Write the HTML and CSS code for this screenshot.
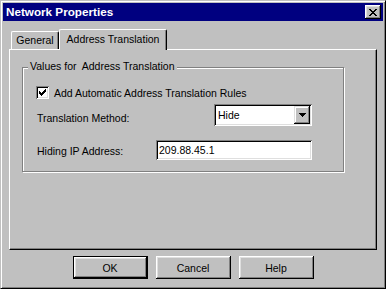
FILE: index.html
```html
<!DOCTYPE html>
<html lang="en">
<head>
    <meta charset="UTF-8">
    <meta name="viewport" content="width=device-width, initial-scale=1.0">
    <title>Network Properties</title>
    <link rel="stylesheet" href="styles.css">
</head>
<body>

<div class="window">

    <div class="titlebar">
        <span class="title">Network Properties</span>
        <button class="close-btn" aria-label="Close">
            <svg width="8" height="7" viewBox="0 0 8 7" shape-rendering="crispEdges">
                <path fill="#000" d="M0 0h2v1H0z M6 0h2v1H6z M1 1h2v1H1z M5 1h2v1H5z M2 2h4v1H2z M3 3h2v1H3z M2 4h4v1H2z M1 5h2v1H1z M5 5h2v1H5z M0 6h2v1H0z M6 6h2v1H6z"/>
            </svg>
        </button>
    </div>

    <div class="tabs">
        <div class="tab">General</div>
        <div class="tab tab-active">Address Translation</div>
    </div>

    <div class="panel">
        <div class="group">
            <span class="group-label">Values for&nbsp; Address Translation</span>

            <div class="check-row">
                <span class="checkbox">
                    <svg width="7" height="7" viewBox="0 0 7 7" shape-rendering="crispEdges">
                        <path fill="#000" d="M6 0h1v1H6z M5 1h2v1H5z M0 2h1v1H0z M4 2h3v1H4z M0 3h2v1H0z M3 3h3v1H3z M0 4h5v1H0z M1 5h3v1H1z M2 6h1v1H2z"/>
                    </svg>
                </span>
                <span>Add Automatic Address Translation Rules</span>
            </div>

            <div class="row row-method">
                <span class="row-label label-method">Translation Method:</span>
                <div class="field select">
                    <span class="select-value">Hide</span>
                    <span class="select-btn">
                        <svg width="7" height="4" viewBox="0 0 7 4" shape-rendering="crispEdges">
                            <path fill="#000" d="M0 0h7v1H0z M1 1h5v1H1z M2 2h3v1H2z M3 3h1v1H3z"/>
                        </svg>
                    </span>
                </div>
            </div>

            <div class="row row-ip">
                <span class="row-label label-ip">Hiding IP Address:</span>
                <div class="field text-field">209.88.45.1</div>
            </div>
        </div>
    </div>

    <div class="buttons">
        <button class="btn btn-default">OK</button>
        <button class="btn">Cancel</button>
        <button class="btn">Help</button>
    </div>

</div>

</body>
</html>
```

FILE: styles.css
```css
body {
    margin: 0;
    font-family: "Liberation Sans", Arial, sans-serif;
    font-size: 10.5px;
    line-height: 12px;
    color: #000;
    background-color: #c0c0c0;
}

.window {
    width: 386px;
    height: 289px;
    box-sizing: border-box;
    padding: 2px;
    background-color: #c0c0c0;
    border: 1px solid;
    border-color: #c0c0c0 #000 #000 #c0c0c0;
    box-shadow: inset 1px 1px #fff, inset -1px -1px #808080;
}

/* title bar */
.titlebar {
    height: 18px;
    background-color: #000080;
    display: flex;
    align-items: center;
    justify-content: space-between;
    padding: 0 2px 0 3px;
}
.title {
    color: #fff;
    font-weight: bold;
    font-size: 11.7px;
}
.close-btn {
    width: 16px;
    height: 14px;
    padding: 0;
    border: none;
    background-color: #c0c0c0;
    box-shadow: inset -1px -1px #000, inset 1px 1px #fff, inset -2px -2px #808080, inset 2px 2px #dfdfdf;
    display: flex;
    align-items: center;
    justify-content: center;
}

/* tabs */
.tabs {
    display: flex;
    align-items: flex-end;
    height: 20px;
    margin: 8px 0 0 8px;
    position: relative;
    z-index: 1;
}
.tab {
    width: 48px;
    height: 18px;
    box-sizing: border-box;
    border-top: 1px solid #fff;
    border-left: 1px solid #fff;
    border-right: 1px solid #000;
    border-radius: 2px 2px 0 0;
    box-shadow: inset -1px 0 #808080;
    background-color: #c0c0c0;
    text-align: center;
    line-height: 17px;
}
.tab-active {
    width: 108px;
    height: 21px;
    margin-bottom: -1px;
    line-height: 18px;
}

/* panel */
.panel {
    height: 201px;
    margin: 0 6px;
    box-sizing: border-box;
    border: 1px solid;
    border-color: #fff #000 #000 #fff;
    box-shadow: inset -1px -1px #808080;
    padding: 17px 0 0 12px;
}

.group {
    position: relative;
    width: 322px;
    height: 105px;
    box-sizing: border-box;
    border: 1px solid #808080;
    box-shadow: inset 1px 1px #fff, 1px 1px #fff;
    padding: 18px 0 0 13px;
}
.group-label {
    position: absolute;
    top: -8px;
    left: 5px;
    padding: 0 2px;
    background-color: #c0c0c0;
}

.check-row {
    display: flex;
    align-items: center;
    gap: 5px;
    height: 13px;
}
.checkbox {
    width: 13px;
    height: 13px;
    box-sizing: border-box;
    background-color: #fff;
    box-shadow: inset 1px 1px #808080, inset -1px -1px #fff, inset 2px 2px #000, inset -2px -2px #dfdfdf;
    display: flex;
    align-items: center;
    justify-content: center;
}

.row {
    display: flex;
    align-items: flex-start;
}
.row-method {
    margin-top: 5px;
}
.row-ip {
    margin-top: 14px;
}
.row-label {
    padding-left: 1px;
    box-sizing: border-box;
}
.label-method {
    width: 178px;
    padding-top: 8px;
}
.label-ip {
    width: 120px;
    padding-top: 5px;
}

.field {
    box-sizing: border-box;
    background-color: #fff;
    box-shadow: inset 1px 1px #808080, inset -1px -1px #fff, inset 2px 2px #000, inset -2px -2px #dfdfdf;
}
.select {
    width: 98px;
    height: 22px;
    padding: 2px;
    display: flex;
    align-items: center;
    justify-content: space-between;
}
.select-value {
    padding-left: 2px;
}
.select-btn {
    width: 16px;
    height: 18px;
    box-sizing: border-box;
    background-color: #c0c0c0;
    box-shadow: inset -1px -1px #000, inset 1px 1px #dfdfdf, inset -2px -2px #808080, inset 2px 2px #fff;
    display: flex;
    align-items: center;
    justify-content: center;
}
.text-field {
    width: 156px;
    height: 20px;
    padding: 4px 0 0 3px;
}

/* bottom buttons */
.buttons {
    display: flex;
    justify-content: center;
    gap: 8px;
    margin-top: 6px;
}
.btn {
    width: 75px;
    height: 23px;
    padding: 0;
    border: none;
    font-family: "Liberation Sans", Arial, sans-serif;
    font-size: 10.5px;
    color: #000;
    background-color: #c0c0c0;
    box-shadow: inset -1px -1px #000, inset 1px 1px #fff, inset -2px -2px #808080, inset 2px 2px #dfdfdf;
}
.btn-default {
    border: 1px solid #000;
}
```
